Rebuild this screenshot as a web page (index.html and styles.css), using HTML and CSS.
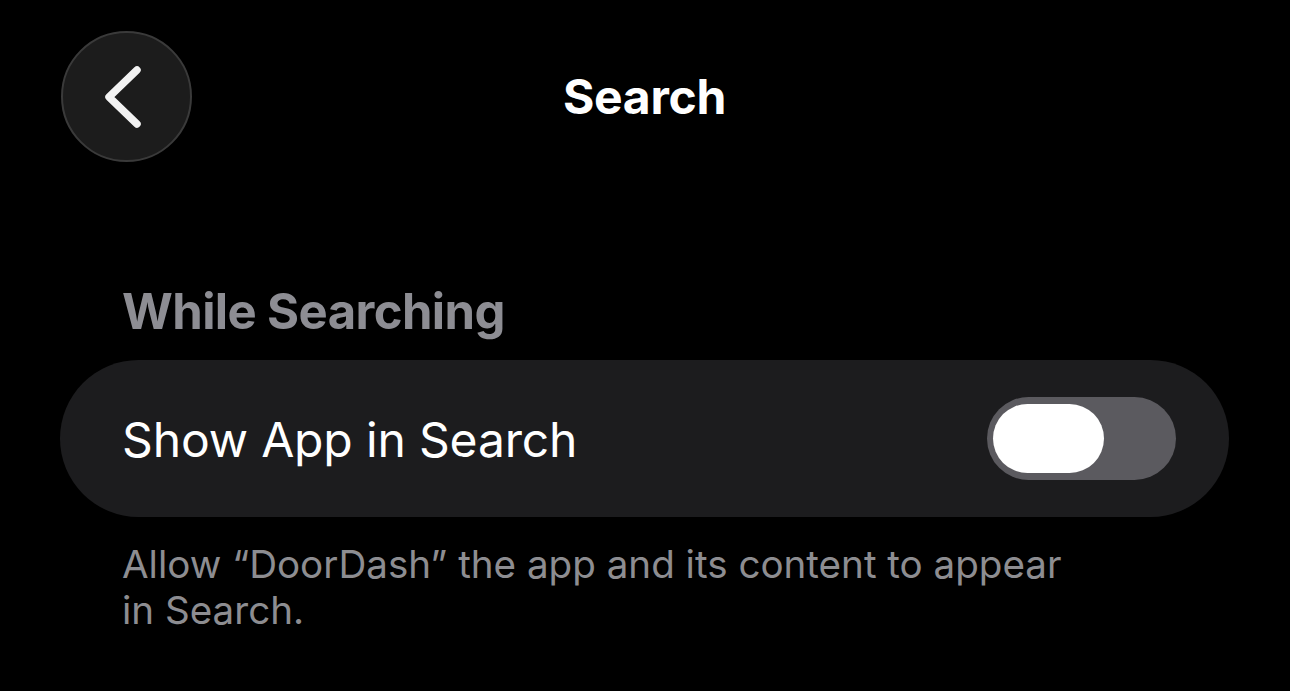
FILE: index.html
```html
<!DOCTYPE html>
<html>
<head>
<meta charset="utf-8">
<link rel="stylesheet" href="styles.css">
</head>
<body>
<div class="screen">
  <header class="navbar">
    <button class="back" aria-label="Back">
      <svg width="40" height="62" viewBox="0 0 40 62"><path d="M34 4 L6 31 L34 58" fill="none" stroke="#f2f2f2" stroke-width="7.5" stroke-linecap="round" stroke-linejoin="round"/></svg>
    </button>
    <h1 class="title">Search</h1>
  </header>
  <section class="group">
    <h2 class="group-title">While Searching</h2>
    <div class="card">
      <span class="row-label">Show App in Search</span>
      <div class="toggle"><div class="thumb"></div></div>
    </div>
    <p class="footnote">Allow “DoorDash” the app and its content to appear in Search.</p>
  </section>
</div>
</body>
</html>
```
FILE: styles.css
```css
* { box-sizing: border-box; }
html, body { margin: 0; padding: 0; background: #000; }
body { font-family: Inter, "Noto Sans", sans-serif; color: #fff; width: 1290px; height: 691px; overflow: hidden; }
.screen { padding: 31px 61px 0 60px; }
.navbar { position: relative; height: 131px; display: flex; align-items: center; justify-content: center; }
.back { position: absolute; left: 1px; top: 0; width: 131px; height: 131px; border-radius: 50%; background: #1c1c1c; border: 2px solid #3a3a3a; display: flex; align-items: center; justify-content: center; padding: 0 8px 0 0; cursor: pointer; }
.title { margin: 0; font-size: 48px; font-weight: 700; letter-spacing: -0.3px; }
.group { padding-top: 122px; }
.group-title { margin: 0 0 20px 62px; font-size: 49px; font-weight: 700; color: #8d8d93; line-height: 56px; letter-spacing: -0.6px; }
.card { height: 157px; border-radius: 79px; background: #1c1c1e; display: flex; align-items: center; justify-content: space-between; padding: 0 53px 0 62px; }
.row-label { font-size: 48px; font-weight: 400; letter-spacing: -0.15px; padding-top: 2px; }
.toggle { width: 189px; height: 83px; border-radius: 42px; background: #5b5a5f; padding: 7px 6px; display: flex; }
.thumb { width: 111px; height: 69px; border-radius: 35px; background: #fff; }
.footnote { margin: 24px 0 0 62px; width: 950px; font-size: 38.6px; line-height: 46px; color: #8d8d91; letter-spacing: 0; }
```
